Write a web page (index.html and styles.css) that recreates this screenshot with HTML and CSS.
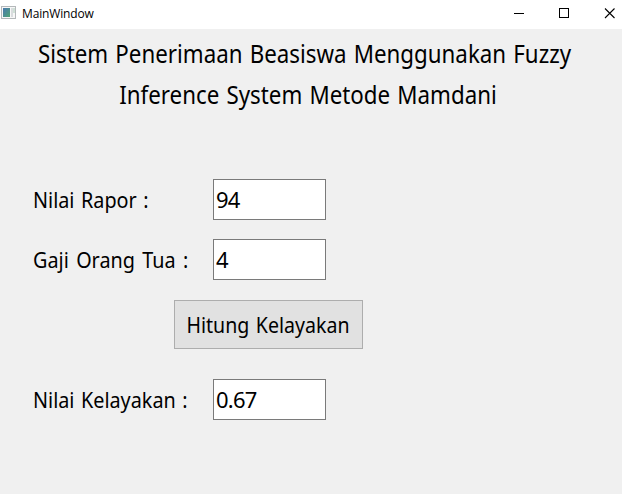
FILE: index.html
```html
<!DOCTYPE html>
<html lang="id">
<head>
<meta charset="utf-8">
<title>MainWindow</title>
<link rel="stylesheet" href="styles.css">
</head>
<body>
<header class="titlebar">
  <svg class="app-icon" width="16" height="14" viewBox="0 0 16 14">
    <defs><linearGradient id="g" x1="0" y1="0" x2="1" y2="1"><stop offset="0" stop-color="#4a78b0"/><stop offset="1" stop-color="#4fa574"/></linearGradient></defs>
    <rect x=".5" y=".5" width="14" height="12" fill="#f7f7f7" stroke="#b4b8ba"/>
    <rect x="2" y="2" width="7" height="9" fill="url(#g)"/>
    <rect x="10" y="2" width="2" height="9" fill="#d9dcde"/>
    <rect x="12" y="2" width="2" height="5" fill="#cfe0d6"/>
  </svg>
  <span class="caption">MainWindow</span>
  <svg class="controls" width="108" height="12" viewBox="0 0 108 12" fill="none" stroke="#000">
    <path d="M0 5.5h10"/>
    <rect x="45.5" y=".5" width="9" height="9"/>
    <path d="M91 .5l9.500 9.500M100.500 .5L91 10" stroke-width="1.100"/>
  </svg>
</header>
<main>
  <h1><span class="line1">Sistem Penerimaan Beasiswa Menggunakan Fuzzy</span><span class="line2">Inference System Metode Mamdani</span></h1>
  <form class="form">
    <div class="row"><label class="l1" for="a">Nilai Rapor :</label><input id="a" value="94"></div>
    <div class="row"><label class="l2" for="b">Gaji Orang Tua :</label><input id="b" value="4"></div>
    <button type="button"><span>Hitung Kelayakan</span></button>
    <div class="row"><label class="l3" for="c">Nilai Kelayakan :</label><input id="c" value="0.67"></div>
  </form>
</main>
</body>
</html>
```

FILE: styles.css
```css
* { box-sizing: border-box; }
body { margin: 0; height: 494px; overflow: hidden; background: #f0f0f0; color: #000; font: 22px "Noto Sans", sans-serif; }
.titlebar { display: flex; height: 29px; background: #fff; }
.app-icon { margin: 6px 0 0 1px; }
.caption { margin-left: 5px; font: 12px/28px "Open Sans", sans-serif; letter-spacing: -0.15px; }
.controls { margin: 8px 0 0 auto; }
h1 { margin: 0; padding: 4px 13px 1px 0; font-size: 25px; font-weight: 400; line-height: 41px; text-align: center; white-space: nowrap; }
h1 span { display: block; transform: scaleX(.893); word-spacing: 1.500px; }
.line2 { margin-left: 7px; }
.form { display: flex; flex-direction: column; align-items: flex-start; margin-top: 63px; padding-left: 33px; }
.row { display: flex; align-items: center; height: 41px; margin-bottom: 19px; }
label { width: 180px; padding-bottom: 2px; white-space: nowrap; transform: scaleX(.9); transform-origin: left; word-spacing: 1.5px; }
.l2 { word-spacing: 2.500px; }
input { width: 113px; height: 41px; padding: 0 2px 1px; border: 1px solid #7a7a7a; border-radius: 0; background: #fff; color: #000; font: inherit; letter-spacing: -.8px; outline: 0; }
button { width: 189px; height: 49px; margin: 1px 0 30px 141px; padding: 0 1px 1px 0; border: 1px solid #adadad; border-radius: 0; background: #e1e1e1; color: #000; font: inherit; white-space: nowrap; }
button span { display: block; transform: scaleX(.89); word-spacing: 1.500px; }
```
